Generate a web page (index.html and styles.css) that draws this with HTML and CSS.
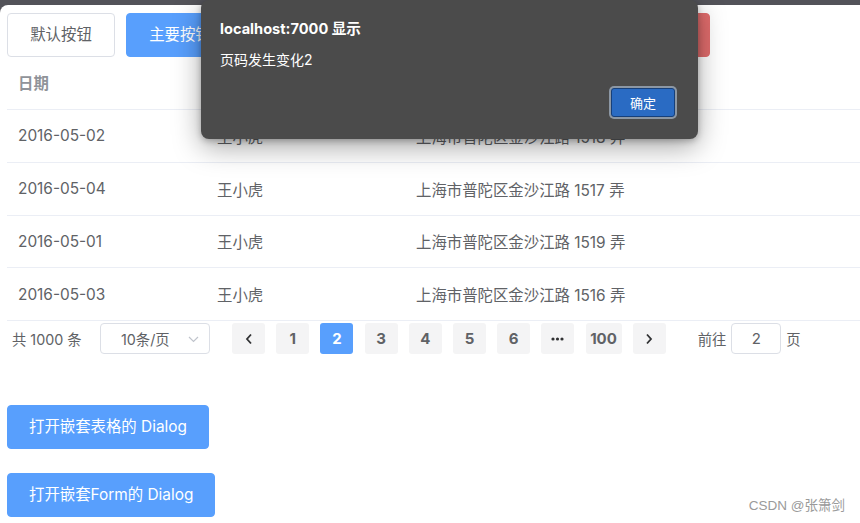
FILE: index.html
```html
<!DOCTYPE html>
<html lang="zh-CN">
<head>
<meta charset="utf-8">
<title>Demo</title>
<link rel="stylesheet" href="styles.css">
</head>
<body>
<div class="topbar"></div>
<div class="page">
  <div class="btn-row">
    <button class="btn btn-default">默认按钮</button>
    <button class="btn btn-primary">主要按钮</button>
    <button class="btn btn-success">成功按钮</button>
    <button class="btn btn-info">信息按钮</button>
    <button class="btn btn-warning">警告按钮</button>
    <button class="btn btn-danger">危险按钮</button>
  </div>
  <div class="table">
    <div class="tr th">
      <div class="td c1">日期</div><div class="td c2">姓名</div><div class="td c3">地址</div>
    </div>
    <div class="tr">
      <div class="td c1">2016-05-02</div><div class="td c2">王小虎</div><div class="td c3">上海市普陀区金沙江路 1518 弄</div>
    </div>
    <div class="tr">
      <div class="td c1">2016-05-04</div><div class="td c2">王小虎</div><div class="td c3">上海市普陀区金沙江路 1517 弄</div>
    </div>
    <div class="tr">
      <div class="td c1">2016-05-01</div><div class="td c2">王小虎</div><div class="td c3">上海市普陀区金沙江路 1519 弄</div>
    </div>
    <div class="tr">
      <div class="td c1">2016-05-03</div><div class="td c2">王小虎</div><div class="td c3">上海市普陀区金沙江路 1516 弄</div>
    </div>
  </div>
  <div class="pager">
    <span class="total">共 1000 条</span>
    <div class="sizes">
      <span>10条/页</span>
      <svg class="caret" width="11" height="7" viewBox="0 0 11 7"><path d="M1 1l4.5 4.5L10 1" fill="none" stroke="#c0c4cc" stroke-width="1.2"/></svg>
    </div>
    <div class="pages">
      <span class="pg nav"><svg width="8" height="12" viewBox="0 0 8 12"><path d="M6 1.5L2 6l4 4.5" fill="none" stroke="#303133" stroke-width="1.8"/></svg></span>
      <span class="pg">1</span>
      <span class="pg active">2</span>
      <span class="pg">3</span>
      <span class="pg">4</span>
      <span class="pg">5</span>
      <span class="pg">6</span>
      <span class="pg more"><svg width="13" height="4" viewBox="0 0 13 4"><circle cx="2" cy="2" r="1.6" fill="#303133"/><circle cx="6.5" cy="2" r="1.6" fill="#303133"/><circle cx="11" cy="2" r="1.6" fill="#303133"/></svg></span>
      <span class="pg wide">100</span>
      <span class="pg nav"><svg width="8" height="12" viewBox="0 0 8 12"><path d="M2 1.5L6 6l-4 4.5" fill="none" stroke="#303133" stroke-width="1.8"/></svg></span>
    </div>
    <div class="jump">
      <span>前往</span>
      <span class="jump-input">2</span>
      <span>页</span>
    </div>
  </div>
  <div class="dlg-buttons">
    <button class="btn btn-primary btn-dlg">打开嵌套表格的 Dialog</button>
    <button class="btn btn-primary btn-dlg">打开嵌套Form的 Dialog</button>
  </div>
  <div class="watermark">CSDN @张箫剑</div>
</div>
<div class="alert">
  <div class="alert-title">localhost:7000 显示</div>
  <div class="alert-msg">页码发生变化2</div>
  <div class="alert-actions"><button class="alert-ok">确定</button></div>
</div>
</body>
</html>
```
FILE: styles.css
```css
* { box-sizing: border-box; }
html, body { margin: 0; padding: 0; }
body {
  background: #535359;
  width: 860px;
  height: 523px;
  overflow: hidden;
  font-family: "Inter", "Noto Sans CJK SC", sans-serif;
  position: relative;
}
.topbar { height: 5px; }
.page {
  background: #fff;
  border-top-left-radius: 8px;
  height: 518px;
  padding: 8px 0 0 7px;
  position: relative;
}
.btn {
  font-family: inherit;
  font-size: 15.4px;
  height: 44px;
  border-radius: 4px;
  border: 1px solid #dcdfe6;
  padding: 0 21px;
  line-height: 1;
  cursor: pointer;
  white-space: nowrap;
}
.btn-row { display: flex; gap: 11px; height: 44px; }
.btn-default { background: #fff; color: #606266; width: 108px; }
.btn-primary { background: #589ffd; border-color: #589ffd; color: #fff; }
.btn-row .btn-primary { width: 108px; }
.btn-success { background: #67c23a; border-color: #67c23a; color: #fff; width: 108px; }
.btn-info { background: #909399; border-color: #909399; color: #fff; width: 108px; }
.btn-warning { background: #e6a23c; border-color: #e6a23c; color: #fff; width: 108px; }
.btn-danger { background: #e06c6c; border-color: #e06c6c; color: #fff; width: 108px; }

.table { font-size: 15.4px; color: #606266; }
.tr {
  display: flex;
  height: 52.75px;
  align-items: center;
  border-bottom: 1px solid #ebeef5;
}
.th { height: 53px; color: #909399; font-weight: bold; padding-bottom: 2px; }
.td { padding-left: 11px; }
.c1 { width: 199px; }
.c2 { width: 199px; }
.c3 { flex: 1; }

.pager {
  display: flex;
  align-items: center;
  height: 35px;
  font-size: 14.3px;
  color: #606266;
}
.total { margin-left: 5px; width: 88px; }
.sizes {
  width: 110px;
  height: 31px;
  border: 1px solid #dcdfe6;
  border-radius: 4px;
  display: flex;
  align-items: center;
  justify-content: space-between;
  padding: 0 10px 0 20px;
  font-size: 14.3px;
}
.caret { margin-top: 1px; }
.pages { display: flex; gap: 11.2px; margin-left: 22px; }
.pg {
  width: 33px;
  height: 31px;
  background: #f4f4f5;
  border-radius: 3px;
  display: flex;
  align-items: center;
  justify-content: center;
  font-weight: bold;
  font-size: 15px;
  color: #606266;
}
.pg.active { background: #589ffd; color: #fff; }
.pg.wide { width: 36px; }
.jump { display: flex; align-items: center; margin-left: 32px; gap: 5px; }
.jump-input {
  width: 50px;
  height: 31px;
  border: 1px solid #dcdfe6;
  border-radius: 4px;
  display: flex;
  align-items: center;
  justify-content: center;
  font-size: 15px;
}
.dlg-buttons {
  display: flex;
  flex-direction: column;
  align-items: flex-start;
  gap: 24px;
  margin-top: 49px;
}
.btn-dlg { padding: 0 21px; height: 44px; }
.watermark {
  position: absolute;
  right: 15px;
  bottom: 9px;
  font-size: 13.5px;
  color: #9a9a9a;
  font-family: "Liberation Sans", "Noto Sans CJK SC", sans-serif;
}
.alert {
  position: absolute;
  left: 201px;
  top: 0;
  width: 497px;
  height: 139px;
  background: #4b4b4b;
  border-radius: 8px;
  box-shadow: 0 8px 28px rgba(0,0,0,0.35), 0 2px 6px rgba(0,0,0,0.25);
  color: #fff;
  padding: 17px 19px 0 19px;
}
.alert-title { font-weight: bold; font-size: 14.6px; height: 24px; line-height: 24px; }
.alert-msg { font-size: 14px; margin-top: 9px; height: 20px; line-height: 20px; }
.alert-actions { display: flex; justify-content: flex-end; margin-top: 18px; padding-right: 4px; }
.alert-ok {
  width: 64px;
  height: 29px;
  background: #2a6bc3;
  color: #fff;
  font-family: inherit;
  font-size: 13px;
  border: 1px solid #17407a;
  border-radius: 3px;
  box-shadow: 0 0 0 2px #8c97a4;
}
```
